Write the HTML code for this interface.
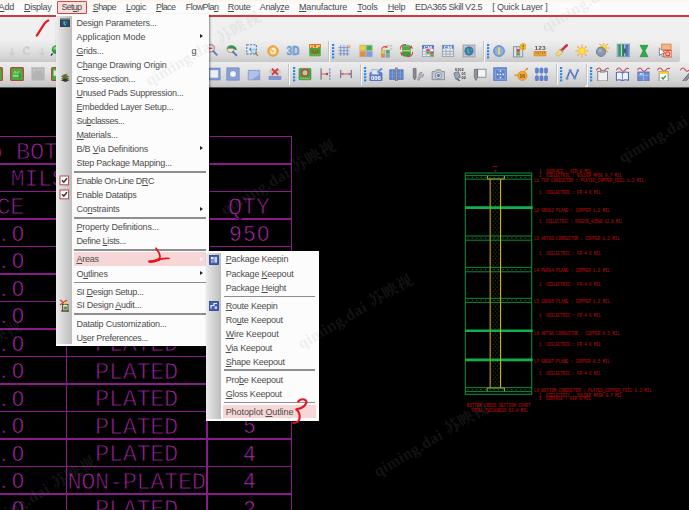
<!DOCTYPE html>
<html><head><meta charset="utf-8"><title>Allegro PCB Designer</title>
<style>
html,body{margin:0;padding:0;background:#000;}
body{width:689px;height:510px;overflow:hidden;position:relative;font-family:"Liberation Sans",sans-serif;}
.abs{position:absolute;}
#canvas{position:absolute;left:0;top:87px;width:689px;height:423px;background:#000;overflow:hidden;}
.hl{position:absolute;height:1.6px;background:#8b1b8b;left:0;width:292px;}
.vl{position:absolute;width:1.6px;background:#8b1b8b;}
.ct{position:absolute;font-family:"Liberation Mono","DejaVu Sans Mono",monospace;font-size:23.6px;line-height:27px;height:27px;color:#ac24ac;white-space:pre;letter-spacing:-0.36px;-webkit-text-stroke:0.9px #000;transform-origin:0 50%;}
.nm{position:absolute;font-family:"Liberation Sans",sans-serif;font-size:21.4px;line-height:27px;height:27px;color:#b82ab8;white-space:pre;-webkit-text-stroke:0.62px #000;}
.menubar{position:absolute;left:0;top:0;width:689px;height:15px;background:linear-gradient(#fdf3e4 0,#fcfaf6 2px,#fcfcfc 4px,#fbfbfb 100%);}
.mb{position:absolute;top:1.1px;font-size:9px;line-height:12px;color:#4a4a4a;letter-spacing:-0.22px;white-space:pre;}
.mb u,.mi u{text-decoration-thickness:0.8px;text-underline-offset:1px;}
.redline{position:absolute;top:15px;height:2px;background:#d23a3a;}
.tbbg{position:absolute;left:0;top:17px;width:689px;height:70px;background:#f0f0f0;}
.menu{position:absolute;background:#fcfcfc;box-shadow:1px 1px 2px rgba(0,0,0,.45);}
.gut{position:absolute;left:0;top:0;bottom:0;width:16px;background:linear-gradient(90deg,#ececec 0,#dcdcdc 30%,#bdbdbd 100%);}
.mi{position:absolute;left:20px;font-size:9px;line-height:14px;height:14px;color:#4d4d4d;letter-spacing:-0.22px;white-space:pre;}
.sep{position:absolute;height:1.7px;background:#8e8e8e;}
.arr{position:absolute;width:0;height:0;border-left:3.5px solid #222;border-top:2.6px solid transparent;border-bottom:2.6px solid transparent;}
.hi{position:absolute;background:#f6d6d6;}
.wm{position:absolute;font-family:"Liberation Serif","Noto Serif CJK SC",serif;font-weight:bold;font-size:16px;line-height:20px;height:20px;white-space:pre;transform:rotate(-30.5deg);transform-origin:0 50%;letter-spacing:0.4px;pointer-events:none;}
</style></head><body>

<div id="canvas">
<div class="hl" style="top:48.9px"></div>
<div class="hl" style="top:76.4px"></div>
<div class="hl" style="top:103.9px"></div>
<div class="hl" style="top:131.4px"></div>
<div class="hl" style="top:158.9px"></div>
<div class="hl" style="top:186.4px"></div>
<div class="hl" style="top:213.9px"></div>
<div class="hl" style="top:241.4px"></div>
<div class="hl" style="top:268.9px"></div>
<div class="hl" style="top:296.4px"></div>
<div class="hl" style="top:323.9px"></div>
<div class="hl" style="top:351.4px"></div>
<div class="hl" style="top:378.9px"></div>
<div class="hl" style="top:406.4px"></div>
<div class="vl" style="left:290.8px;top:49.7px;height:400px"></div>
<div class="vl" style="left:65.5px;top:104.7px;height:400px"></div>
<div class="vl" style="left:206.3px;top:104.7px;height:400px"></div>
<div class="ct" style="left:-259.9px;top:51.6px">DRILL CHART: TOP to BOT</div>
<div class="ct" style="left:57.5px;top:51.6px">TOM</div>
<div class="ct" style="left:-224.2px;top:79.1px">ALL UNITS ARE IN MILS</div>
<div class="ct" style="left:-100.2px;top:106.6px">TOLERANCE</div>
<div class="ct" style="left:95.1px;top:106.6px;width:82.8px">PLATED</div>
<div class="ct" style="left:228.1px;top:106.6px;width:41.4px">QTY</div>
<div class="nm" style="right:665.0px;top:133.5px;letter-spacing:5.4px;margin-right:-5.4px">+0.0/-0.0</div>
<div class="ct" style="left:95.1px;top:134.1px;width:82.8px">PLATED</div>
<div class="nm" style="left:229.6px;top:133.5px;letter-spacing:1.9px">950</div>
<div class="nm" style="right:665.0px;top:161.0px;letter-spacing:5.4px;margin-right:-5.4px">+0.0/-0.0</div>
<div class="ct" style="left:95.1px;top:161.6px;width:82.8px">PLATED</div>
<div class="nm" style="left:229.6px;top:161.0px;letter-spacing:1.9px">120</div>
<div class="nm" style="right:665.0px;top:188.5px;letter-spacing:5.4px;margin-right:-5.4px">+0.0/-0.0</div>
<div class="ct" style="left:95.1px;top:189.1px;width:82.8px">PLATED</div>
<div class="nm" style="left:236.5px;top:188.5px;letter-spacing:1.9px">64</div>
<div class="nm" style="right:665.0px;top:216.0px;letter-spacing:5.4px;margin-right:-5.4px">+0.0/-0.0</div>
<div class="ct" style="left:95.1px;top:216.6px;width:82.8px">PLATED</div>
<div class="nm" style="left:236.5px;top:216.0px;letter-spacing:1.9px">32</div>
<div class="nm" style="right:665.0px;top:243.5px;letter-spacing:5.4px;margin-right:-5.4px">+0.0/-0.0</div>
<div class="ct" style="left:95.1px;top:244.1px;width:82.8px">PLATED</div>
<div class="nm" style="left:236.5px;top:243.5px;letter-spacing:1.9px">18</div>
<div class="nm" style="right:665.0px;top:271.0px;letter-spacing:5.4px;margin-right:-5.4px">+0.0/-0.0</div>
<div class="ct" style="left:95.1px;top:271.6px;width:82.8px">PLATED</div>
<div class="nm" style="left:236.5px;top:271.0px;letter-spacing:1.9px">12</div>
<div class="nm" style="right:665.0px;top:298.5px;letter-spacing:5.4px;margin-right:-5.4px">+0.0/-0.0</div>
<div class="ct" style="left:95.1px;top:299.1px;width:82.8px">PLATED</div>
<div class="nm" style="left:243.4px;top:298.5px;letter-spacing:1.9px">6</div>
<div class="nm" style="right:665.0px;top:326.0px;letter-spacing:5.4px;margin-right:-5.4px">+0.0/-0.0</div>
<div class="ct" style="left:95.1px;top:326.6px;width:82.8px">PLATED</div>
<div class="nm" style="left:243.4px;top:326.0px;letter-spacing:1.9px">5</div>
<div class="nm" style="right:665.0px;top:353.5px;letter-spacing:5.4px;margin-right:-5.4px">+0.0/-0.0</div>
<div class="ct" style="left:95.1px;top:354.1px;width:82.8px">PLATED</div>
<div class="nm" style="left:243.4px;top:353.5px;letter-spacing:1.9px">4</div>
<div class="nm" style="right:665.0px;top:381.0px;letter-spacing:5.4px;margin-right:-5.4px">+0.0/-0.0</div>
<div class="ct" style="left:67.5px;top:381.6px;width:138.0px">NON-PLATED</div>
<div class="nm" style="left:243.4px;top:381.0px;letter-spacing:1.9px">4</div>
<div class="nm" style="right:665.0px;top:408.5px;letter-spacing:5.4px;margin-right:-5.4px">+0.0/-0.0</div>
<div class="ct" style="left:95.1px;top:409.1px;width:82.8px">PLATED</div>
<div class="nm" style="left:243.4px;top:408.5px;letter-spacing:1.9px">2</div>
</div>
<svg class="abs" style="left:0;top:0" width="689" height="510" viewBox="0 0 689 510">
<pattern id="vd" width="4" height="4.4" patternUnits="userSpaceOnUse"><rect x="0.6" y="0.5" width="1.1" height="1.1" fill="#4a4508"/><rect x="2.6" y="2.7" width="1.1" height="1.1" fill="#4a4508"/></pattern>
<rect x="491.2" y="179.6" width="8.8" height="207.8" fill="url(#vd)"/>
<rect x="465.3" y="173" width="66.40000000000003" height="221.3" fill="none" stroke="#0c8a3c" stroke-width="1.1"/>
<line x1="465.3" x2="531.7" y1="175.6" y2="175.6" stroke="#0c8a3c" stroke-width="1"/>
<line x1="465.3" x2="531.7" y1="179.2" y2="179.2" stroke="#0c8a3c" stroke-width="1"/>
<line x1="467.3" x2="529.7" y1="177.39999999999998" y2="177.39999999999998" stroke="#0a6a30" stroke-width="1.4" stroke-dasharray="1.2 3.2"/>
<line x1="465.3" x2="531.7" y1="236" y2="236" stroke="#0c8a3c" stroke-width="1"/>
<line x1="465.3" x2="531.7" y1="240.2" y2="240.2" stroke="#0c8a3c" stroke-width="1"/>
<line x1="467.3" x2="529.7" y1="238.1" y2="238.1" stroke="#0a6a30" stroke-width="1.4" stroke-dasharray="1.2 3.2"/>
<line x1="465.3" x2="531.7" y1="267.4" y2="267.4" stroke="#0c8a3c" stroke-width="1"/>
<line x1="465.3" x2="531.7" y1="271.8" y2="271.8" stroke="#0c8a3c" stroke-width="1"/>
<line x1="467.3" x2="529.7" y1="269.6" y2="269.6" stroke="#0a6a30" stroke-width="1.4" stroke-dasharray="1.2 3.2"/>
<line x1="465.3" x2="531.7" y1="298.3" y2="298.3" stroke="#0c8a3c" stroke-width="1"/>
<line x1="465.3" x2="531.7" y1="302.4" y2="302.4" stroke="#0c8a3c" stroke-width="1"/>
<line x1="467.3" x2="529.7" y1="300.35" y2="300.35" stroke="#0a6a30" stroke-width="1.4" stroke-dasharray="1.2 3.2"/>
<line x1="465.3" x2="531.7" y1="387.6" y2="387.6" stroke="#0c8a3c" stroke-width="1"/>
<line x1="465.3" x2="531.7" y1="391.6" y2="391.6" stroke="#0c8a3c" stroke-width="1"/>
<line x1="467.3" x2="529.7" y1="389.6" y2="389.6" stroke="#0a6a30" stroke-width="1.4" stroke-dasharray="1.2 3.2"/>
<line x1="465.3" x2="532.7" y1="207.6" y2="207.6" stroke="#10b04c" stroke-width="2.6"/>
<line x1="465.3" x2="532.7" y1="330.7" y2="330.7" stroke="#10b04c" stroke-width="2.6"/>
<line x1="465.3" x2="532.7" y1="359.9" y2="359.9" stroke="#10b04c" stroke-width="2.6"/>
<line x1="490.2" x2="490.2" y1="179.2" y2="387.6" stroke="#a08e1a" stroke-width="1.3"/>
<line x1="500.6" x2="500.6" y1="179.2" y2="387.6" stroke="#c9b722" stroke-width="1.1"/>
<path d="M487.4 175.8V179H504.4V175.8" fill="none" stroke="#b9a61c" stroke-width="1"/>
<path d="M487.2 391.4V388H504.6V391.4" fill="none" stroke="#b9a61c" stroke-width="1"/>
<text x="493" y="171.5" font-family="Liberation Mono,monospace" font-size="4" fill="#c01010" textLength="4.5" lengthAdjust="spacingAndGlyphs">T</text>
<line x1="492.8" x2="497.2" y1="166.6" y2="166.6" stroke="#c01010" stroke-width=".8"/>
<text x="539" y="172.7" font-family="Liberation Mono,monospace" font-size="5.4" fill="#a00a0a" stroke="#a00a0a" stroke-width=".15" textLength="52.3" lengthAdjust="spacingAndGlyphs" xml:space="preserve">1  SURFACE : AIR 0 MIL</text>
<text x="539" y="177.0" font-family="Liberation Mono,monospace" font-size="5.4" fill="#a00a0a" stroke="#a00a0a" stroke-width=".15" textLength="82.5" lengthAdjust="spacingAndGlyphs" xml:space="preserve">1  DIELECTRIC : SOLDER MASK 0.7 MIL</text>
<text x="534" y="181.5" font-family="Liberation Mono,monospace" font-size="5.4" fill="#a00a0a" stroke="#a00a0a" stroke-width=".15" textLength="110.0" lengthAdjust="spacingAndGlyphs" xml:space="preserve">L1 TOP CONDUCTOR : PLATED_COPPER_FOIL 1.2 MIL</text>
<text x="539" y="194.0" font-family="Liberation Mono,monospace" font-size="5.4" fill="#a00a0a" stroke="#a00a0a" stroke-width=".15" textLength="61.8" lengthAdjust="spacingAndGlyphs" xml:space="preserve">1  DIELECTRIC : FR-4 8 MIL</text>
<text x="534" y="211.7" font-family="Liberation Mono,monospace" font-size="5.4" fill="#a00a0a" stroke="#a00a0a" stroke-width=".15" textLength="76.0" lengthAdjust="spacingAndGlyphs" xml:space="preserve">L2 GND02 PLANE : COPPER 1.2 MIL</text>
<text x="539" y="223.3" font-family="Liberation Mono,monospace" font-size="5.4" fill="#a00a0a" stroke="#a00a0a" stroke-width=".15" textLength="83.5" lengthAdjust="spacingAndGlyphs" xml:space="preserve">1  DIELECTRIC : ROGERS_4350B 12.0 MIL</text>
<text x="534" y="240.0" font-family="Liberation Mono,monospace" font-size="5.4" fill="#a00a0a" stroke="#a00a0a" stroke-width=".15" textLength="85.6" lengthAdjust="spacingAndGlyphs" xml:space="preserve">L3 ART03 CONDUCTOR : COPPER 1.2 MIL</text>
<text x="539" y="254.6" font-family="Liberation Mono,monospace" font-size="5.4" fill="#a00a0a" stroke="#a00a0a" stroke-width=".15" textLength="61.8" lengthAdjust="spacingAndGlyphs" xml:space="preserve">1  DIELECTRIC : FR-4 8 MIL</text>
<text x="534" y="271.9" font-family="Liberation Mono,monospace" font-size="5.4" fill="#a00a0a" stroke="#a00a0a" stroke-width=".15" textLength="76.0" lengthAdjust="spacingAndGlyphs" xml:space="preserve">L4 PWR04 PLANE : COPPER 1.2 MIL</text>
<text x="539" y="286.1" font-family="Liberation Mono,monospace" font-size="5.4" fill="#a00a0a" stroke="#a00a0a" stroke-width=".15" textLength="61.8" lengthAdjust="spacingAndGlyphs" xml:space="preserve">1  DIELECTRIC : FR-4 8 MIL</text>
<text x="534" y="303.3" font-family="Liberation Mono,monospace" font-size="5.4" fill="#a00a0a" stroke="#a00a0a" stroke-width=".15" textLength="76.0" lengthAdjust="spacingAndGlyphs" xml:space="preserve">L5 GND05 PLANE : COPPER 1.2 MIL</text>
<text x="539" y="317.3" font-family="Liberation Mono,monospace" font-size="5.4" fill="#a00a0a" stroke="#a00a0a" stroke-width=".15" textLength="61.8" lengthAdjust="spacingAndGlyphs" xml:space="preserve">1  DIELECTRIC : FR-4 8 MIL</text>
<text x="534" y="334.6" font-family="Liberation Mono,monospace" font-size="5.4" fill="#a00a0a" stroke="#a00a0a" stroke-width=".15" textLength="85.6" lengthAdjust="spacingAndGlyphs" xml:space="preserve">L6 ART06 CONDUCTOR : COPPER 0.5 MIL</text>
<text x="539" y="345.9" font-family="Liberation Mono,monospace" font-size="5.4" fill="#a00a0a" stroke="#a00a0a" stroke-width=".15" textLength="61.8" lengthAdjust="spacingAndGlyphs" xml:space="preserve">1  DIELECTRIC : FR-4 8 MIL</text>
<text x="534" y="363.3" font-family="Liberation Mono,monospace" font-size="5.4" fill="#a00a0a" stroke="#a00a0a" stroke-width=".15" textLength="76.0" lengthAdjust="spacingAndGlyphs" xml:space="preserve">L7 GND07 PLANE : COPPER 0.5 MIL</text>
<text x="539" y="374.8" font-family="Liberation Mono,monospace" font-size="5.4" fill="#a00a0a" stroke="#a00a0a" stroke-width=".15" textLength="61.8" lengthAdjust="spacingAndGlyphs" xml:space="preserve">1  DIELECTRIC : FR-4 8 MIL</text>
<text x="534" y="392.1" font-family="Liberation Mono,monospace" font-size="5.4" fill="#a00a0a" stroke="#a00a0a" stroke-width=".15" textLength="117.7" lengthAdjust="spacingAndGlyphs" xml:space="preserve">L8 BOTTOM CONDUCTOR : PLATED_COPPER_FOIL 1.2 MIL</text>
<text x="539" y="396.5" font-family="Liberation Mono,monospace" font-size="5.4" fill="#a00a0a" stroke="#a00a0a" stroke-width=".15" textLength="83.0" lengthAdjust="spacingAndGlyphs" xml:space="preserve">1  DIELECTRIC : SOLDER MASK 0.7 MIL</text>
<text x="539" y="399.9" font-family="Liberation Mono,monospace" font-size="5.4" fill="#a00a0a" stroke="#a00a0a" stroke-width=".15" textLength="52.0" lengthAdjust="spacingAndGlyphs" xml:space="preserve">1  SURFACE : AIR 0 MIL</text>
<text x="466.8" y="407.0" font-family="Liberation Mono,monospace" font-size="5.4" fill="#a00a0a" stroke="#a00a0a" stroke-width=".15" textLength="63.7" lengthAdjust="spacingAndGlyphs" xml:space="preserve">BOTTOM CROSS SECTION CHART</text>
<text x="470.7" y="412.1" font-family="Liberation Mono,monospace" font-size="5.4" fill="#a00a0a" stroke="#a00a0a" stroke-width=".15" textLength="56.8" lengthAdjust="spacingAndGlyphs" xml:space="preserve">TOTAL THICKNESS 62.0 MIL</text>
</svg>
<div class="tbbg"></div>
<div class="abs" style="left:0;top:39.5px;width:680px;height:22.5px;background:linear-gradient(#efefef 0,#e9e9e9 25%,#d6d6d6 75%,#c9c9c9 100%);border-radius:0 2px 2px 0"></div>
<div class="abs" style="left:0;top:62px;width:585.5px;height:25px;background:linear-gradient(#ececec 0,#e4e4e4 30%,#d0d0d0 80%,#c2c2c2 100%);border-radius:0 2px 2px 0"></div>
<div class="abs" style="left:587.5px;top:62px;width:102px;height:25px;background:linear-gradient(#ececec 0,#e4e4e4 30%,#d0d0d0 80%,#c2c2c2 100%);"></div>
<div class="abs" style="left:0;top:86.6px;width:689px;height:1px;background:#555"></div>
<div class="menubar"></div>
<div class="redline" style="left:0;width:689px"></div>
<div class="abs" style="left:56.8px;top:1.2px;width:28.4px;height:10.4px;border:1px solid #cf4848;background:#f9dede;box-sizing:content-box;border-radius:1px"></div>
<span class="mb" style="left:-1.4px;letter-spacing:-0.212px"><u>A</u>dd</span>
<span class="mb" style="left:24px;letter-spacing:-0.303px"><u>D</u>isplay</span>
<span class="mb" style="left:61.6px;letter-spacing:-0.771px">Set<u>u</u>p</span>
<span class="mb" style="left:92.7px;letter-spacing:-0.571px"><u>S</u>hape</span>
<span class="mb" style="left:126px;letter-spacing:-0.347px"><u>L</u>ogic</span>
<span class="mb" style="left:156px;letter-spacing:-0.628px"><u>P</u>lace</span>
<span class="mb" style="left:185.8px;letter-spacing:-0.555px">FlowPla<u>n</u></span>
<span class="mb" style="left:227.8px;letter-spacing:-0.264px"><u>R</u>oute</span>
<span class="mb" style="left:259.8px;letter-spacing:-0.406px">Analy<u>z</u>e</span>
<span class="mb" style="left:299px;letter-spacing:-0.177px"><u>M</u>anufacture</span>
<span class="mb" style="left:357.3px;letter-spacing:-0.144px"><u>T</u>ools</span>
<span class="mb" style="left:387.8px;letter-spacing:-0.28px"><u>H</u>elp</span>
<span class="mb" style="left:415.1px;letter-spacing:-0.385px">EDA365 Skill V2.5</span>
<span class="mb" style="left:492.3px;letter-spacing:-0.189px">[ Quick Layer ]</span>
<svg class="abs" style="left:4.6px;top:45.0px;filter:blur(0.5px)" width="14.0" height="14.0" viewBox="0 0 16 16"><path d="M8 3V11M5 8.5L8 11.5L11 8.5" fill="none" stroke="#cbcbcb" stroke-width="1.5"/><path d="M4.5 13.6H11.5" stroke="#cfcfcf" stroke-width="1.2"/></svg>
<svg class="abs" style="left:34.8px;top:45.0px;filter:blur(0.5px)" width="14.0" height="14.0" viewBox="0 0 16 16"><path d="M8 3V11M5 8.5L8 11.5L11 8.5" fill="none" stroke="#cbcbcb" stroke-width="1.5"/><path d="M4.5 13.6H11.5" stroke="#cfcfcf" stroke-width="1.2"/></svg>
<svg class="abs" style="left:20.0px;top:44.0px;filter:blur(0.5px)" width="14.0" height="14.0" viewBox="0 0 16 16"><path d="M10.5 4.2A4 4 0 1 0 11 10.5" fill="none" stroke="#cbcbcb" stroke-width="1.8"/><path d="M8 2.5L11.5 4.5L8.5 7Z" fill="#cbcbcb"/></svg>
<svg class="abs" style="left:-10.0px;top:45.0px;filter:blur(0.5px)" width="14.0" height="14.0" viewBox="0 0 16 16"><path d="M8 3V12" stroke="#c6c6c6" stroke-width="2"/></svg>
<svg class="abs" style="left:50.0px;top:43.0px;filter:blur(0.5px)" width="14.0" height="14.0" viewBox="0 0 16 16"><circle cx="7" cy="7.5" r="5" fill="#2ea043"/><circle cx="6" cy="6" r="2" fill="#7fd88a"/><path d="M3 12L1 14.5" stroke="#334" stroke-width="1.5"/></svg>
<svg class="abs" style="left:204.5px;top:43.0px;filter:blur(0.5px)" width="14.0" height="14.0" viewBox="0 0 16 16"><circle cx="6.5" cy="6" r="4.2" fill="#f6e4e4" stroke="#b9848a" stroke-width="1.3"/><path d="M4.5 6H8.5" stroke="#d02020" stroke-width="1.3"/><path d="M9.5 9.2L13.5 13.5" stroke="#6c78b8" stroke-width="2.2" stroke-linecap="round"/></svg>
<svg class="abs" style="left:225.0px;top:43.0px;filter:blur(0.5px)" width="14.0" height="14.0" viewBox="0 0 16 16"><circle cx="6.2" cy="7" r="3.8" fill="#f3e3d8" stroke="#c9a58e" stroke-width="1.3"/><path d="M2.5 6.5C4 2.5 10 2 12.5 5.5L13 8L9.5 6.2" fill="#2c9a4e" stroke="#1f7c3c" stroke-width=".6"/><path d="M9 10L13 14" stroke="#6c78b8" stroke-width="2.2" stroke-linecap="round"/></svg>
<svg class="abs" style="left:245.0px;top:43.0px;filter:blur(0.5px)" width="14.0" height="14.0" viewBox="0 0 16 16"><rect x="2" y="2" width="11" height="10.5" fill="#dfe8f1" stroke="#5d7e9e" stroke-width="1.3" stroke-dasharray="2.4 1.4"/><path d="M4.5 7.2L7 4.8V9.6Z" fill="#5d7e9e"/><circle cx="10" cy="9.5" r="2.6" fill="#bfe0f7" stroke="#7aa6c8" stroke-width=".8"/><path d="M12 11.6L14.5 14.3" stroke="#b9822c" stroke-width="1.6" stroke-linecap="round"/></svg>
<svg class="abs" style="left:266.0px;top:43.5px;filter:blur(0.5px)" width="14.0" height="14.0" viewBox="0 0 16 16"><circle cx="8" cy="8" r="6" fill="#f3a83a" stroke="#e08c1e" stroke-width=".8"/><circle cx="8" cy="8" r="4.4" fill="#f9c468"/><path d="M5.6 8.4A2.5 2.5 0 1 0 8 5.6" fill="none" stroke="#fff" stroke-width="1.3"/><path d="M8.4 3.9L6 5.7L8.6 7.2Z" fill="#fff"/></svg>
<svg class="abs" style="left:286.1px;top:43.1px;filter:blur(0.5px)" width="14.875" height="14.875" viewBox="0 0 16 16"><path d="M4 4L14 4L15 13L5 13Z" fill="#9fbfdf" opacity=".55"/><text x="0.6" y="13" font-family="Liberation Sans,sans-serif" font-weight="bold" font-size="13.5" fill="#7aa6d6" stroke="#5b8cc4" stroke-width=".3" textLength="14" lengthAdjust="spacingAndGlyphs">3D</text></svg>
<svg class="abs" style="left:307.5px;top:43.0px;filter:blur(0.5px)" width="14.0" height="14.0" viewBox="0 0 16 16"><rect x="1.5" y="1" width="13" height="14" rx="1" fill="#3fa33a"/><rect x="1.5" y="1" width="13" height="5" rx="1" fill="#d9731c"/><text x="2.2" y="5.3" font-family="Liberation Sans,sans-serif" font-weight="bold" font-size="4.6" fill="#ffe9a8" textLength="11.6" lengthAdjust="spacingAndGlyphs">FLIP</text><path d="M4.5 8.5C5 12 11 12 11.5 8.5" fill="none" stroke="#c8451e" stroke-width="1.5"/><path d="M2.5 13.6H13.5" stroke="#c9d84a" stroke-width="1" stroke-dasharray="1.5 1"/></svg>
<div class="abs" style="left:329.0px;top:40.7px;width:1px;height:21px;background:#f8f8f8;box-shadow:-1px 0 0 #c4c4c4"></div>
<svg class="abs" style="left:332.4px;top:43.5px;filter:blur(.3px)" width="3" height="15" viewBox="0 0 3 15"><rect x="0" y="0.0" width="2.2" height="2" fill="#2b86e6"/><rect x="0" y="3.1" width="2.2" height="2" fill="#2b86e6"/><rect x="0" y="6.2" width="2.2" height="2" fill="#2b86e6"/><rect x="0" y="9.3" width="2.2" height="2" fill="#2b86e6"/><rect x="0" y="12.4" width="2.2" height="2" fill="#2b86e6"/></svg>
<svg class="abs" style="left:337.1px;top:43.1px;filter:blur(0.5px)" width="14.875" height="14.875" viewBox="0 0 16 16"><path d="M4 2V14M7.5 2V14M11 2V14M1.5 5H13.5M1.5 8.3H13.5M1.5 11.6H13.5" stroke="#6a8ccc" stroke-width=".9"/><path d="M12.5 0.8L13.4 3L15.6 3.2L13.8 4.4L14.4 6.4L12.5 5.2" fill="#f4a63a"/></svg>
<svg class="abs" style="left:358.5px;top:43.5px;filter:blur(0.5px)" width="14.0" height="14.0" viewBox="0 0 16 16"><rect x="1" y="1.4" width="6.4" height="6" fill="#f2cf2a" stroke="#b9b08a" stroke-width=".9"/><rect x="8.6" y="1.4" width="6.4" height="6" fill="#3fae4a" stroke="#9ab79a" stroke-width=".9"/><rect x="1" y="8.6" width="6.4" height="6" fill="#ec8a3c" stroke="#c4a78f" stroke-width=".9"/><rect x="8.6" y="8.6" width="6.4" height="6" fill="#7d9fdf" stroke="#96a4c4" stroke-width=".9"/></svg>
<svg class="abs" style="left:379.0px;top:43.5px;filter:blur(0.5px)" width="14.0" height="14.0" viewBox="0 0 16 16"><rect x="9" y="1" width="2.6" height="2.6" fill="#c9c9c9"/><rect x="12.5" y="1" width="2.6" height="2.6" fill="#c9c9c9"/><rect x="12.5" y="4.6" width="2.6" height="2.6" fill="#c9c9c9"/><rect x="2.5" y="7" width="4.2" height="4" fill="#f2cf2a" stroke="#a99" stroke-width=".6"/><rect x="8" y="7" width="4.2" height="4" fill="#3fae4a" stroke="#8a9" stroke-width=".6"/><rect x="2.5" y="11.6" width="4.2" height="3.6" fill="#ec8a3c" stroke="#a98" stroke-width=".6"/><rect x="8" y="11.6" width="4.2" height="3.6" fill="#7d9fdf" stroke="#89a" stroke-width=".6"/><path d="M3 6.4C3.5 3 6.5 2.2 8.6 3.6" fill="none" stroke="#d9483c" stroke-width="1.3"/><path d="M7.6 1.6L10 4L6.8 4.8Z" fill="#d9483c"/></svg>
<svg class="abs" style="left:399.3px;top:43.1px;filter:blur(0.5px)" width="14.875" height="14.875" viewBox="0 0 16 16"><ellipse cx="8" cy="4.3" rx="4.6" ry="2" fill="#5bb85a" stroke="#2f8a3a" stroke-width=".7"/><rect x="3.4" y="4.3" width="9.2" height="8" fill="#4aa94d"/><ellipse cx="8" cy="12.3" rx="4.6" ry="2" fill="#3f9a45" stroke="#2f8a3a" stroke-width=".7"/><path d="M4 8.3H12" stroke="#e6d94a" stroke-width="1.2"/><path d="M1.5 7C0.5 3.5 4 1.5 7.5 1.6M14.5 9.5C15.5 13 12 15 8.5 14.6" fill="none" stroke="#d8454a" stroke-width="1.1"/><path d="M13.2 2.2L15 6.2L11.4 5.6ZM2.8 14L1 10L4.6 10.6Z" fill="#d8454a"/></svg>
<svg class="abs" style="left:420.5px;top:43.5px;filter:blur(0.5px)" width="14.0" height="14.0" viewBox="0 0 16 16"><rect x="1.5" y="1.5" width="13" height="13" fill="#e9edf3" stroke="#8d9bb5" stroke-width=".9"/><rect x="1.5" y="1.5" width="13" height="4" fill="#4d76c2"/><text x="3" y="5.2" font-family="Liberation Sans,sans-serif" font-weight="bold" font-size="4.4" fill="#fff" textLength="9.5" lengthAdjust="spacingAndGlyphs">CM</text><path d="M5.8 5.5V14.5M10.2 5.5V14.5M1.5 8.5H14.5M1.5 11.5H14.5" stroke="#8d9bb5" stroke-width=".7"/><rect x="6.2" y="6" width="3.6" height="2.3" fill="#e23a3a"/><rect x="10.6" y="8.9" width="3.6" height="2.3" fill="#e23a3a"/><rect x="6.2" y="8.9" width="3.6" height="2.3" fill="#3fae4a"/><rect x="10.6" y="11.8" width="3.6" height="2.3" fill="#3fae4a"/></svg>
<svg class="abs" style="left:440.6px;top:43.5px;filter:blur(0.5px)" width="14.0" height="14.0" viewBox="0 0 16 16"><rect x="1.5" y="1.5" width="13" height="13" fill="#e4e7ec" stroke="#8f98a8" stroke-width=".9"/><rect x="1.5" y="1.5" width="13" height="4" fill="#5f85c8"/><text x="3" y="5.2" font-family="Liberation Sans,sans-serif" font-weight="bold" font-size="4.4" fill="#fff" textLength="9.5" lengthAdjust="spacingAndGlyphs">CM</text><path d="M5.8 5.5V14.5M10.2 5.5V14.5M1.5 8.5H14.5M1.5 11.5H14.5" stroke="#8f98a8" stroke-width=".8"/></svg>
<svg class="abs" style="left:461.6px;top:43.5px;filter:blur(0.5px)" width="14.0" height="14.0" viewBox="0 0 16 16"><rect x="1.2" y="1.2" width="13.6" height="13.6" fill="#c9ccd2" stroke="#8f949c" stroke-width=".9"/><path d="M4.6 1.2V14.8M8 1.2V14.8M11.4 1.2V14.8M1.2 4.6H14.8M1.2 8H14.8M1.2 11.4H14.8" stroke="#9aa0a8" stroke-width=".6"/><circle cx="8" cy="8" r="4.8" fill="#3c78c8" stroke="#2a5a9a" stroke-width=".6"/><path d="M5.5 5.5C7 4.5 8.5 5.5 8 7C7.5 8.5 9.5 9 9 10.5C8.5 12 6.5 11 6 9.5Z" fill="#4fb85a"/><path d="M10 5L11.6 6.5L10.6 8Z" fill="#4fb85a"/></svg>
<div class="abs" style="left:483.5px;top:40.7px;width:1px;height:21px;background:#f8f8f8;box-shadow:-1px 0 0 #c4c4c4"></div>
<svg class="abs" style="left:486.9px;top:43.5px;filter:blur(.3px)" width="3" height="15" viewBox="0 0 3 15"><rect x="0" y="0.0" width="2.2" height="2" fill="#2b86e6"/><rect x="0" y="3.1" width="2.2" height="2" fill="#2b86e6"/><rect x="0" y="6.2" width="2.2" height="2" fill="#2b86e6"/><rect x="0" y="9.3" width="2.2" height="2" fill="#2b86e6"/><rect x="0" y="12.4" width="2.2" height="2" fill="#2b86e6"/></svg>
<svg class="abs" style="left:492.0px;top:43.5px;filter:blur(0.5px)" width="14.0" height="14.0" viewBox="0 0 16 16"><circle cx="8" cy="8" r="6.2" fill="#7b9fdc" stroke="#5a7fc0" stroke-width=".9"/><circle cx="8" cy="8" r="4.8" fill="#8fb0e6"/><rect x="7.1" y="4" width="1.8" height="8" fill="#f6e23a"/></svg>
<svg class="abs" style="left:511.6px;top:43.1px;filter:blur(0.5px)" width="14.875" height="14.875" viewBox="0 0 16 16"><rect x="1.5" y="4" width="10" height="11" fill="#dfe2e6" stroke="#7f858f" stroke-width=".9"/><path d="M5 4V15M8.3 4V15" stroke="#7f858f" stroke-width=".7"/><rect x="5.3" y="6.5" width="2.8" height="3" fill="#e23a3a"/><rect x="5.3" y="10" width="2.8" height="3.4" fill="#3fae4a"/><circle cx="12" cy="4" r="3.4" fill="#f6c12a" stroke="#d99a1a" stroke-width=".7"/><rect x="11.5" y="2" width="1.1" height="2.6" fill="#7a4a10"/><rect x="11.5" y="5.2" width="1.1" height="1" fill="#7a4a10"/></svg>
<svg class="abs" style="left:533.0px;top:43.5px;filter:blur(0.5px)" width="14.0" height="14.0" viewBox="0 0 16 16"><text x="1.8" y="7" font-family="Liberation Sans,sans-serif" font-weight="bold" font-size="6.6" fill="#5a5a5a" textLength="12.6" lengthAdjust="spacingAndGlyphs">123</text><rect x="1.2" y="8.6" width="13.6" height="5" fill="#f0a43a" stroke="#d48a1e" stroke-width=".8"/><path d="M3.5 8.6V11M6 8.6V12M8.5 8.6V11M11 8.6V12M13 8.6V11" stroke="#9a5a10" stroke-width=".7"/></svg>
<svg class="abs" style="left:554.0px;top:43.5px;filter:blur(0.5px)" width="14.0" height="14.0" viewBox="0 0 16 16"><path d="M9.5 6.5L14.5 1.5" stroke="#c9304a" stroke-width="3" stroke-linecap="round"/><path d="M7 5.5L10.5 9L6 13.5C4 14.5 2 13 2.5 11Z" fill="#f0d88a" stroke="#c9a94a" stroke-width=".8"/><path d="M7.2 6L10 8.8" stroke="#8a8a8a" stroke-width="1.4"/></svg>
<svg class="abs" style="left:574.6px;top:43.5px;filter:blur(0.5px)" width="14.0" height="14.0" viewBox="0 0 16 16"><g stroke="#f0a030" stroke-width="1.3"><path d="M8 0.5V3M8 13V15.5M0.5 8H3M13 8H15.5M2.7 2.7L4.5 4.5M11.5 11.5L13.3 13.3M2.7 13.3L4.5 11.5M11.5 4.5L13.3 2.7"/></g><circle cx="8" cy="8" r="4" fill="#fbe23a" stroke="#f0b030" stroke-width=".8"/></svg>
<svg class="abs" style="left:595.0px;top:43.1px;filter:blur(0.5px)" width="14.875" height="14.875" viewBox="0 0 16 16"><g transform="translate(2.5,-1.5) scale(.85)"><g stroke="#f0a030" stroke-width="1.3"><path d="M8 0.5V3M8 13V15.5M0.5 8H3M13 8H15.5M2.7 2.7L4.5 4.5M11.5 11.5L13.3 13.3M2.7 13.3L4.5 11.5M11.5 4.5L13.3 2.7"/></g><circle cx="8" cy="8" r="4" fill="#fbe23a" stroke="#f0b030" stroke-width=".8"/></g><circle cx="6.5" cy="9.5" r="5" fill="#8a98b4" stroke="#5f6c88" stroke-width=".8"/><circle cx="5.3" cy="8.2" r="2" fill="#a6b2ca"/></svg>
<svg class="abs" style="left:615.6px;top:43.1px;filter:blur(0.5px)" width="14.875" height="14.875" viewBox="0 0 16 16"><rect x="1.2" y="1.2" width="13.6" height="13.6" fill="#b9d0e8" stroke="#6f8fb8" stroke-width=".8"/><rect x="2.4" y="1.6" width="2.8" height="12.8" fill="#2f9a4a"/><rect x="6.6" y="1.6" width="2.2" height="12.8" fill="#2f7a5a"/><rect x="10" y="1.6" width="3.6" height="12.8" fill="#4f78b8"/><rect x="9" y="6" width="1.2" height="5" fill="#223"/></svg>
<svg class="abs" style="left:637.0px;top:43.5px;filter:blur(0.5px)" width="14.0" height="14.0" viewBox="0 0 16 16"><path d="M3.5 1.5H12.5L9 8L12.5 14.5H3.5L7 8Z" fill="#2faa4a" stroke="#1f8a3a" stroke-width=".8"/></svg>
<svg class="abs" style="left:657.6px;top:43.1px;filter:blur(0.5px)" width="14.875" height="14.875" viewBox="0 0 16 16"><rect x="4" y="1.2" width="10" height="6" fill="#f0b88a" stroke="#d9854a" stroke-width="1"/><rect x="6" y="8" width="9" height="7" rx="1" fill="#f6cfc0" stroke="#e2573a" stroke-width="1.1"/><circle cx="10.5" cy="11.5" r="2.2" fill="none" stroke="#e2402a" stroke-width="1.1"/><path d="M1.5 5.5V13.5L3.6 11.6L5.2 15L6.6 14.3L5 11L7.6 10.8Z" fill="#fff" stroke="#667" stroke-width=".8"/></svg>
<svg class="abs" style="left:-11.2px;top:67.0px;filter:blur(0.5px)" width="14.0" height="14.0" viewBox="0 0 16 16"><rect x="0.8" y="0.8" width="14.4" height="14.4" rx="1" fill="#3fb23f" stroke="#b8453a" stroke-width="1.5"/></svg>
<svg class="abs" style="left:9.5px;top:67.0px;filter:blur(0.5px)" width="14.0" height="14.0" viewBox="0 0 16 16"><rect x="0.8" y="0.8" width="14.4" height="14.4" rx="1" fill="#3fb23f" stroke="#b8453a" stroke-width="1.5"/><path d="M3 7.5L5.5 3L8 6L10.5 3L13 7.5" fill="#6fd46a" stroke="#c86a4a" stroke-width=".7"/><rect x="3.5" y="9" width="6" height="2.2" fill="#8fe08a"/><path d="M11.3 5V13" stroke="#2a8a2a" stroke-width="1"/></svg>
<svg class="abs" style="left:31.2px;top:67.0px;filter:blur(0.5px)" width="14.0" height="14.0" viewBox="0 0 16 16"><rect x="0.6" y="0.6" width="14.8" height="14.8" fill="#b4b4b4" stroke="#c2c2c2" stroke-width=".8"/><path d="M3 7V3.2H13V7" fill="none" stroke="#c9c9c9" stroke-width="1.2"/></svg>
<svg class="abs" style="left:51.0px;top:67.0px;filter:blur(0.5px)" width="14.0" height="14.0" viewBox="0 0 16 16"><rect x="0.8" y="0.8" width="14.4" height="14.4" rx="1" fill="#3fb23f" stroke="#b8453a" stroke-width="1.5"/><rect x="3" y="4" width="5" height="6" fill="#d8f0d8"/></svg>
<svg class="abs" style="left:207.0px;top:67.0px;filter:blur(0.5px)" width="14.0" height="14.0" viewBox="0 0 16 16"><rect x="1" y="1.2" width="14" height="13.6" fill="#7f98d4" stroke="#6f86c4" stroke-width=".8"/><rect x="3.2" y="3.6" width="9.6" height="8.6" fill="#e9eef8"/></svg>
<svg class="abs" style="left:226.0px;top:67.0px;filter:blur(0.5px)" width="14.0" height="14.0" viewBox="0 0 16 16"><rect x="1" y="1" width="14" height="14" fill="#8aa2d8" stroke="#6f86c4" stroke-width=".9"/><circle cx="8" cy="8" r="4" fill="#f2f5fb" stroke="#5f76b4" stroke-width=".8"/></svg>
<svg class="abs" style="left:247.0px;top:67.5px;filter:blur(0.5px)" width="14.0" height="14.0" viewBox="0 0 16 16"><rect x="1.2" y="2.6" width="13.6" height="11" rx="1" fill="#8aa2d8" stroke="#7f90c0" stroke-width=".8" stroke-dasharray="2 1"/><path d="M2 3.4H14V7L6 13H2Z" fill="#b9c8ea" opacity=".8"/></svg>
<svg class="abs" style="left:267.5px;top:67.0px;filter:blur(0.5px)" width="14.0" height="14.0" viewBox="0 0 16 16"><rect x="1.5" y="3" width="13" height="4.5" fill="#c9c9c9"/><rect x="1.2" y="10.5" width="13.6" height="3.8" fill="#7f98d4" stroke="#6f86c4" stroke-width=".7"/><path d="M4.5 2L11.5 9M11.5 2L4.5 9" stroke="#d83a3a" stroke-width="2.2"/></svg>
<div class="abs" style="left:289.2px;top:64.0px;width:1px;height:21px;background:#f8f8f8;box-shadow:-1px 0 0 #c4c4c4"></div>
<svg class="abs" style="left:292.6px;top:66.8px;filter:blur(.3px)" width="3" height="15" viewBox="0 0 3 15"><rect x="0" y="0.0" width="2.2" height="2" fill="#2b86e6"/><rect x="0" y="3.1" width="2.2" height="2" fill="#2b86e6"/><rect x="0" y="6.2" width="2.2" height="2" fill="#2b86e6"/><rect x="0" y="9.3" width="2.2" height="2" fill="#2b86e6"/><rect x="0" y="12.4" width="2.2" height="2" fill="#2b86e6"/></svg>
<svg class="abs" style="left:297.6px;top:67.0px;filter:blur(0.5px)" width="14.0" height="14.0" viewBox="0 0 16 16"><rect x="1.2" y="1.6" width="13.6" height="13" rx="1" fill="#3fa94a" stroke="#2f8a3a" stroke-width=".7"/><circle cx="8" cy="6.6" r="3.8" fill="#9fd8a0" stroke="#d83a3a" stroke-width="1.8"/><path d="M2.5 13H13.5" stroke="#d8d84a" stroke-width="1" stroke-dasharray="1.5 1"/></svg>
<svg class="abs" style="left:318.0px;top:67.0px;filter:blur(0.5px)" width="14.0" height="14.0" viewBox="0 0 16 16"><path d="M3.5 1.5V14.5" stroke="#5a5a6a" stroke-width="1.1"/><path d="M13.5 1.5V14.5" stroke="#4a6ab8" stroke-width="1.1" stroke-dasharray="2.5 1.2"/><path d="M3.5 8H11" stroke="#d85a5a" stroke-width="1.1"/><circle cx="10.2" cy="8" r="1.5" fill="#d83a3a"/></svg>
<svg class="abs" style="left:339.0px;top:67.0px;filter:blur(0.5px)" width="14.0" height="14.0" viewBox="0 0 16 16"><path d="M2 3.5V12.5M14 3.5V12.5" stroke="#4a6ab8" stroke-width="1.2"/><path d="M2 8H14" stroke="#d85a5a" stroke-width="1.1"/><path d="M2.3 8L5 6.4V9.6ZM13.7 8L11 6.4V9.6Z" fill="#d85a5a"/></svg>
<div class="abs" style="left:360.5px;top:64.0px;width:1px;height:21px;background:#f8f8f8;box-shadow:-1px 0 0 #c4c4c4"></div>
<svg class="abs" style="left:363.9px;top:66.8px;filter:blur(.3px)" width="3" height="15" viewBox="0 0 3 15"><rect x="0" y="0.0" width="2.2" height="2" fill="#2b86e6"/><rect x="0" y="3.1" width="2.2" height="2" fill="#2b86e6"/><rect x="0" y="6.2" width="2.2" height="2" fill="#2b86e6"/><rect x="0" y="9.3" width="2.2" height="2" fill="#2b86e6"/><rect x="0" y="12.4" width="2.2" height="2" fill="#2b86e6"/></svg>
<svg class="abs" style="left:368.6px;top:66.6px;filter:blur(0.5px)" width="14.875" height="14.875" viewBox="0 0 16 16"><rect x="1" y="6" width="13" height="9" rx="1" fill="#5f82cc" stroke="#4a6ab4" stroke-width=".8"/><rect x="3" y="3" width="7" height="5" fill="#dfe6f4" stroke="#8a9cc8" stroke-width=".7"/><path d="M9 6L14 1.5" stroke="#6f90d8" stroke-width="2.2"/><text x="2.2" y="13.6" font-family="Liberation Sans,sans-serif" font-weight="bold" font-size="5.6" fill="#fff" textLength="10.6" lengthAdjust="spacingAndGlyphs">006</text></svg>
<svg class="abs" style="left:389.3px;top:66.6px;filter:blur(0.5px)" width="14.875" height="14.875" viewBox="0 0 16 16"><rect x="0.8" y="3" width="6" height="10.6" fill="#5f82cc" stroke="#4a6ab4" stroke-width=".7"/><rect x="9.2" y="3" width="6" height="10.6" fill="#5f82cc" stroke="#4a6ab4" stroke-width=".7"/><path d="M0.8 6.5H15.2M0.8 10H15.2M3.8 3V13.6M12.2 3V13.6" stroke="#8aa8e0" stroke-width=".6"/><rect x="6.8" y="1" width="2.4" height="14" fill="#9a9fa8" stroke="#6a6f78" stroke-width=".6"/></svg>
<svg class="abs" style="left:409.6px;top:66.6px;filter:blur(0.5px)" width="14.875" height="14.875" viewBox="0 0 16 16"><path d="M3.5 1.5V11L5 14L6.5 11V1.5Z" fill="#8a8f98" stroke="#5a5f68" stroke-width=".7"/><path d="M8 13.5L10 9.5C9 7.5 10.5 5.5 13 5.8L11.6 7.6L12.8 9L14.8 7.8C15 10 13 11.5 11.4 10.8L9.6 14.5Z" fill="#b9bec8" stroke="#7a7f88" stroke-width=".7"/></svg>
<svg class="abs" style="left:430.6px;top:66.6px;filter:blur(0.5px)" width="14.875" height="14.875" viewBox="0 0 16 16"><path d="M1.2 5H4.5L5.8 3H10.2L11.5 5H14.8V13.6H1.2Z" fill="#c4c7cc" stroke="#7f848c" stroke-width=".9"/><circle cx="8" cy="9.2" r="3.3" fill="#e9ecf2" stroke="#6f747c" stroke-width=".8"/><circle cx="8" cy="9.2" r="1.9" fill="#5f86cc"/></svg>
<svg class="abs" style="left:451.6px;top:66.6px;filter:blur(0.5px)" width="14.875" height="14.875" viewBox="0 0 16 16"><path d="M2 6.5L7 5L9 11L4 13Z" fill="#9aa6b8" stroke="#5f6a7c" stroke-width=".8"/><path d="M5 12.5L8.5 15.2" stroke="#5f6a7c" stroke-width="1.6"/><text x="3" y="4.2" font-family="Liberation Sans,sans-serif" font-weight="bold" font-size="4.4" fill="#333" textLength="9.5" lengthAdjust="spacingAndGlyphs">0102</text><text x="10.2" y="8.8" font-family="Liberation Sans,sans-serif" font-weight="bold" font-size="4.2" fill="#333">01</text><text x="10.2" y="13.4" font-family="Liberation Sans,sans-serif" font-weight="bold" font-size="4.2" fill="#333">02</text></svg>
<svg class="abs" style="left:472.1px;top:66.6px;filter:blur(0.5px)" width="14.875" height="14.875" viewBox="0 0 16 16"><rect x="6" y="2.4" width="9" height="8.6" fill="#f4f4f4" stroke="#7f848c" stroke-width=".9"/><path d="M2.5 2.5H6V11L4.2 14.5L2.5 11Z" fill="#8f949c" stroke="#5a5f68" stroke-width=".7"/></svg>
<svg class="abs" style="left:492.6px;top:66.6px;filter:blur(0.5px)" width="14.875" height="14.875" viewBox="0 0 16 16"><rect x="0.8" y="0.8" width="14.4" height="14.4" fill="#6f8fd4" stroke="#5a78c0" stroke-width=".9"/><rect x="3" y="3" width="10" height="10" fill="#5f82cc" stroke="#9fb6e8" stroke-width=".6"/><g fill="#f2f5fb"><rect x="7.2" y="3.6" width="1.6" height="1.6"/><rect x="4.2" y="7.2" width="1.6" height="1.6"/><rect x="10.2" y="7.2" width="1.6" height="1.6"/><rect x="7.2" y="10.6" width="1.6" height="1.6"/><rect x="7.2" y="7.2" width="1.6" height="1.6"/></g></svg>
<svg class="abs" style="left:513.6px;top:67.1px;filter:blur(0.5px)" width="14.875" height="14.875" viewBox="0 0 16 16"><path d="M1 9H6M10 6L14 1.8" stroke="#e89a2a" stroke-width="1.2"/><circle cx="1.6" cy="9" r="1.2" fill="#e89a2a"/><circle cx="14" cy="2" r="1.3" fill="#e89a2a"/><circle cx="9" cy="9.5" r="5" fill="#f2a83a" stroke="#d98a1e" stroke-width=".8"/><text x="6" y="11.6" font-family="Liberation Sans,sans-serif" font-weight="bold" font-size="5.6" fill="#7a4a10" textLength="6" lengthAdjust="spacingAndGlyphs">16</text></svg>
<svg class="abs" style="left:533.6px;top:66.6px;filter:blur(0.5px)" width="14.875" height="14.875" viewBox="0 0 16 16"><g fill="#5f86d0" stroke="#4a6ab4" stroke-width=".5"><rect x="1.4" y="1" width="3.4" height="5.6" rx="1.2"/><rect x="6.3" y="1" width="3.4" height="5.6" rx="1.2"/><rect x="11.2" y="1" width="3.4" height="5.6" rx="1.2"/><rect x="1.4" y="9.4" width="3.4" height="5.6" rx="1.2"/><rect x="6.3" y="9.4" width="3.4" height="5.6" rx="1.2"/><rect x="11.2" y="9.4" width="3.4" height="5.6" rx="1.2"/></g><path d="M3.1 6.6V9.4M8 6.6V9.4M12.9 6.6V9.4" stroke="#8aa8e0" stroke-width="1"/></svg>
<div class="abs" style="left:556.5px;top:64.0px;width:1px;height:21px;background:#f8f8f8;box-shadow:-1px 0 0 #c4c4c4"></div>
<svg class="abs" style="left:559.9px;top:66.8px;filter:blur(.3px)" width="3" height="15" viewBox="0 0 3 15"><rect x="0" y="0.0" width="2.2" height="2" fill="#2b86e6"/><rect x="0" y="3.1" width="2.2" height="2" fill="#2b86e6"/><rect x="0" y="6.2" width="2.2" height="2" fill="#2b86e6"/><rect x="0" y="9.3" width="2.2" height="2" fill="#2b86e6"/><rect x="0" y="12.4" width="2.2" height="2" fill="#2b86e6"/></svg>
<svg class="abs" style="left:564.6px;top:66.6px;filter:blur(0.5px)" width="14.875" height="14.875" viewBox="0 0 16 16"><path d="M2 12.5L5.5 3.5L10.5 12L14 3.5" fill="none" stroke="#4f72bc" stroke-width="1.6" stroke-linejoin="round"/><circle cx="2.2" cy="12.5" r="1.5" fill="#6f8fd4"/><circle cx="5.5" cy="3.6" r="1.5" fill="#6f8fd4"/><circle cx="10.5" cy="12" r="1.5" fill="#6f8fd4"/><circle cx="14" cy="3.6" r="1.5" fill="#6f8fd4"/></svg>
<div class="abs" style="left:586.5px;top:64.0px;width:1px;height:21px;background:#f8f8f8;box-shadow:-1px 0 0 #c4c4c4"></div>
<svg class="abs" style="left:589.9px;top:66.8px;filter:blur(.3px)" width="3" height="15" viewBox="0 0 3 15"><rect x="0" y="0.0" width="2.2" height="2" fill="#2b86e6"/><rect x="0" y="3.1" width="2.2" height="2" fill="#2b86e6"/><rect x="0" y="6.2" width="2.2" height="2" fill="#2b86e6"/><rect x="0" y="9.3" width="2.2" height="2" fill="#2b86e6"/><rect x="0" y="12.4" width="2.2" height="2" fill="#2b86e6"/></svg>
<svg class="abs" style="left:594.6px;top:66.6px;filter:blur(0.5px)" width="14.875" height="14.875" viewBox="0 0 16 16"><path d="M1.5 3.5C3 0.5 5 0.5 6.5 3C8 5.5 10 5 11.5 2.5C12.5 1 14 1 15 2" fill="none" stroke="#c8404a" stroke-width="1.1"/><rect x="3" y="4.6" width="10.4" height="10.4" fill="#f0f0f0" stroke="#6f747c" stroke-width=".9"/><rect x="5.8" y="3.4" width="4.8" height="2.2" fill="#a8adb4" stroke="#6f747c" stroke-width=".5"/></svg>
<svg class="abs" style="left:614.6px;top:66.6px;filter:blur(0.5px)" width="14.875" height="14.875" viewBox="0 0 16 16"><path d="M1.5 3.5C3 0.5 5 0.5 6.5 3C8 5.5 10 5 11.5 2.5C12.5 1 14 1 15 2" fill="none" stroke="#c8404a" stroke-width="1.1"/><path d="M1.5 6C4 5 6.5 5.2 8 6.6C9.5 5.2 12 5 14.5 6V14.2C12 13.4 9.5 13.6 8 15C6.5 13.6 4 13.4 1.5 14.2Z" fill="#eef2fa" stroke="#4a6ab4" stroke-width="1.1"/><path d="M8 6.6V15" stroke="#4a6ab4" stroke-width=".8"/></svg>
<svg class="abs" style="left:635.6px;top:66.6px;filter:blur(0.5px)" width="14.875" height="14.875" viewBox="0 0 16 16"><path d="M1.5 3.5C3 0.5 5 0.5 6.5 3C8 5.5 10 5 11.5 2.5C12.5 1 14 1 15 2" fill="none" stroke="#c8404a" stroke-width="1.1"/><rect x="2" y="5.4" width="12" height="9.8" fill="#6f8fd4" stroke="#4a6ab4" stroke-width=".9"/><path d="M8 5.4V15.2M2 9H14" stroke="#a9c0ee" stroke-width=".8"/><rect x="4" y="6.6" width="3" height="1.6" fill="#dfe8fa"/></svg>
<svg class="abs" style="left:656.3px;top:66.6px;filter:blur(0.5px)" width="14.875" height="14.875" viewBox="0 0 16 16"><path d="M1.5 3.5C3 0.5 5 0.5 6.5 3C8 5.5 10 5 11.5 2.5C12.5 1 14 1 15 2" fill="none" stroke="#c8404a" stroke-width="1.1"/><rect x="3.4" y="4.8" width="9.6" height="10.4" fill="#f8f8f8" stroke="#7f848c" stroke-width=".9"/><rect x="3.4" y="4.8" width="9.6" height="2.6" fill="#f2cf3a"/><path d="M6 11L7.6 12.8L10.6 9.2" fill="none" stroke="#2f9a3a" stroke-width="1.4"/></svg>
<svg class="abs" style="left:678.6px;top:66.6px;filter:blur(0.5px)" width="14.875" height="14.875" viewBox="0 0 16 16"><path d="M1.5 3.5C3 0.5 5 0.5 6.5 3C8 5.5 10 5 11.5 2.5C12.5 1 14 1 15 2" fill="none" stroke="#c8404a" stroke-width="1.1"/><path d="M4 15L12 5.5L14.5 7.5L6.5 16Z" fill="#8f949c" stroke="#4a4f58" stroke-width=".8"/></svg>
<!-- menus -->
<div class="menu" style="left:56.4px;top:14.2px;width:153px;height:331.8px">
<div class="gut" style="top:2px;bottom:2px"></div>
<div class="hi" style="left:17.5px;top:238.2px;width:133.5px;height:13.6px"></div>
<div class="mi" style="top:1.8px">Desi<u>g</u>n Parameters...</div>
<div class="mi" style="top:15.8px;letter-spacing:0.005px">Applica<u>t</u>ion Mode</div>
<div class="mi" style="top:29.8px"><u>G</u>rids...</div>
<div class="mi" style="top:43.8px;letter-spacing:-0.160px">C<u>h</u>ange Drawing Origin</div>
<div class="mi" style="top:57.8px"><u>C</u>ross-section...</div>
<div class="mi" style="top:71.8px;letter-spacing:-0.270px"><u>U</u>nused Pads Suppression...</div>
<div class="mi" style="top:85.8px"><u>E</u>mbedded Layer Setup...</div>
<div class="mi" style="top:99.8px;letter-spacing:-0.440px">Su<u>b</u>classes...</div>
<div class="mi" style="top:113.8px"><u>M</u>aterials...</div>
<div class="mi" style="top:127.8px;letter-spacing:-0.140px">B/B <u>V</u>ia Definitions</div>
<div class="mi" style="top:142.1px">Step Package Mapping...</div>
<div class="mi" style="top:160.2px;letter-spacing:-0.380px">Enable On-Line D<u>R</u>C</div>
<div class="mi" style="top:174.1px">Enable Datatips</div>
<div class="mi" style="top:188.0px">Co<u>n</u>straints</div>
<div class="mi" style="top:206.0px;letter-spacing:-0.160px"><u>P</u>roperty Definitions...</div>
<div class="mi" style="top:220.1px;letter-spacing:-0.330px">Define <u>L</u>ists...</div>
<div class="mi" style="top:238.3px"><u>A</u>reas</div>
<div class="mi" style="top:252.4px">O<u>u</u>tlines</div>
<div class="mi" style="top:270.4px;letter-spacing:-0.300px">SI <u>D</u>esign Setup...</div>
<div class="mi" style="top:284.3px">SI Design <u>A</u>udit...</div>
<div class="mi" style="top:302.5px">Datatip Customization...</div>
<div class="mi" style="top:316.4px;letter-spacing:-0.310px">U<u>s</u>er Preferences...</div>
<div class="sep" style="left:18px;top:157.1px;width:132.0px"></div>
<div class="sep" style="left:18px;top:202.9px;width:132.0px"></div>
<div class="sep" style="left:18px;top:235.2px;width:132.0px"></div>
<div class="sep" style="left:18px;top:267.4px;width:132.0px"></div>
<div class="sep" style="left:18px;top:299.2px;width:132.0px"></div>
<div class="arr" style="left:143.2px;top:20.2px"></div>
<div class="arr" style="left:143.2px;top:132.2px"></div>
<div class="arr" style="left:143.2px;top:192.4px"></div>
<div class="arr" style="left:143.2px;top:256.8px"></div>
<div class="arr" style="left:143.2px;top:242.7px;border-left-color:#fff"></div>
<div class="mi" style="left:135.2px;top:29.8px">g</div>
<svg class="abs" style="left:3px;top:161.3px;filter:blur(.3px)" width="11" height="11" viewBox="0 0 11 11"><rect x="1" y="1" width="8.6" height="8.8" fill="#fdfdfd" stroke="#b9484a" stroke-width="1"/><path d="M3 5.2L4.8 7.2L8 3.2" fill="none" stroke="#333" stroke-width="1.5"/></svg>
<svg class="abs" style="left:3px;top:175.0px;filter:blur(.3px)" width="11" height="11" viewBox="0 0 11 11"><rect x="1" y="1" width="8.6" height="8.8" fill="#fdfdfd" stroke="#b9484a" stroke-width="1"/><path d="M3 5.2L4.8 7.2L8 3.2" fill="none" stroke="#333" stroke-width="1.5"/></svg>
<svg class="abs" style="left:3.5px;top:3.4px;filter:blur(.45px)" width="10" height="9.6" viewBox="0 0 12 12" preserveAspectRatio="none"><rect x="0" y="0" width="12" height="11.6" fill="#3a3f48"/><rect x="0" y="0" width="12" height="2" fill="#8a8f98"/><circle cx="6" cy="6.4" r="3.6" fill="#1f4fb8"/><path d="M4 4.5C5.5 3.5 7 5 6.2 6.4C5.6 7.6 7.4 8.2 6.8 9.4C5.6 9.8 4.4 8.6 4.2 7.4Z" fill="#3fc85a"/><path d="M7.6 4.2L8.8 5.6L7.8 6.6Z" fill="#3fc85a"/></svg>
<svg class="abs" style="left:3.4px;top:59.2px;filter:blur(.45px)" width="10.4" height="9.8" viewBox="0 0 13 12" preserveAspectRatio="none"><path d="M1 4.5L6 2L12 4L7 6.5Z" fill="#b8403a"/><path d="M1 6.6L6 4.4L12 6.4L7 8.8Z" fill="#2f8a3a"/><path d="M1 8.8L6 6.8L12 8.6L7 11Z" fill="#3a3030"/><path d="M3 3L9 1.5" stroke="#4a6a3a" stroke-width="1.2"/></svg>
<svg class="abs" style="left:3px;top:284.4px;filter:blur(.4px)" width="11" height="13" viewBox="0 0 11 13"><path d="M1 1L8 6M8 1L1 6" stroke="#d8403a" stroke-width="1.4"/><rect x="3.6" y="5.4" width="5.4" height="6.6" fill="#e8e4d8" stroke="#4a3a2a" stroke-width=".9"/><rect x="4.6" y="7.6" width="3.4" height="3" fill="#4a9a4a"/><path d="M2 12H10" stroke="#5a3a2a" stroke-width="1"/><rect x="5" y="3" width="2.4" height="2.4" fill="#e8c84a"/></svg>
</div>
<div class="menu" style="left:205.6px;top:250.8px;width:113.1px;height:170.4px">
<div class="gut" style="width:15px;top:2px;bottom:2px"></div>
<div class="hi" style="left:17px;top:154.2px;width:93.1px;height:13.2px"></div>
<div class="mi" style="left:20.1px;top:1.7px"><u>P</u>ackage Keepin</div>
<div class="mi" style="left:20.1px;top:15.8px">Package <u>K</u>eepout</div>
<div class="mi" style="left:20.1px;top:29.8px">Package <u>H</u>eight</div>
<div class="mi" style="left:20.1px;top:48.0px"><u>R</u>oute Keepin</div>
<div class="mi" style="left:20.1px;top:61.9px">Ro<u>u</u>te Keepout</div>
<div class="mi" style="left:20.1px;top:76.0px;letter-spacing:-0.140px"><u>W</u>ire Keepout</div>
<div class="mi" style="left:20.1px;top:90.0px"><u>V</u>ia Keepout</div>
<div class="mi" style="left:20.1px;top:103.9px"><u>S</u>hape Keepout</div>
<div class="mi" style="left:20.1px;top:122.1px">Pro<u>b</u>e Keepout</div>
<div class="mi" style="left:20.1px;top:136.0px"><u>G</u>loss Keepout</div>
<div class="mi" style="left:20.1px;top:154.1px;letter-spacing:-0.080px">Photoplot <u>O</u>utline</div>
<div class="sep" style="left:18px;top:44.9px;width:91.6px"></div>
<div class="sep" style="left:18px;top:118.6px;width:91.6px"></div>
<div class="sep" style="left:18px;top:150.9px;width:91.6px"></div>
<svg class="abs" style="left:3.4px;top:3.8px;filter:blur(.35px)" width="10" height="10" viewBox="0 0 10 10"><rect x="0.5" y="0.5" width="9" height="9" fill="#3f5fb4" stroke="#2a3f8a" stroke-width=".8"/><rect x="2" y="2" width="2.6" height="2.4" fill="#e8eefa"/><rect x="5.4" y="2" width="2.6" height="5.6" fill="#c8d4f0"/><rect x="2" y="5.4" width="2.6" height="2.2" fill="#9fb4e4"/></svg>
<svg class="abs" style="left:3.4px;top:50.1px;filter:blur(.35px)" width="10" height="10" viewBox="0 0 10 10"><rect x="0.5" y="0.5" width="9" height="9" fill="#3f5fb4" stroke="#2a3f8a" stroke-width=".8"/><path d="M2 7.5V4.5H5V2.5H8" fill="none" stroke="#e8eefa" stroke-width="1.2"/><rect x="5.6" y="5.4" width="2.4" height="2.4" fill="#c8d4f0"/></svg>
</div>
<svg class="abs" style="left:0;top:0;pointer-events:none" width="689" height="510" viewBox="0 0 689 510">
<g fill="none" stroke="#e8141c" stroke-linecap="round" stroke-linejoin="round">
<path d="M36.7 35.6C39.6 31.6 42.4 26.4 45 23C46.2 21.6 47.2 20.9 48.4 20.5" stroke-width="2.1"/>
<path d="M156.1 248.3C157.6 250 159.6 252.6 160 256.4C160 257.6 159.4 258.4 158.7 258.9" stroke-width="1.8"/>
<path d="M149.4 261.5C152.4 261.9 156 260.6 159 259.4" stroke-width="2.7"/>
<path d="M157 260.2C161 258.6 165.4 258.2 169 258.5" stroke-width="1.7"/>
<path d="M298.1 401.4C300 399.6 303 399 304.8 399.7C306.6 400.6 306.8 402.2 306.2 403.2C305 405.6 303 407 301.6 407.7C299.6 408.6 297.6 409 296.2 409.4C297.6 410.4 298.6 411.6 299.1 413.2C299.8 415.4 299.9 417 299.5 418.4C299.2 419.8 298.9 420.6 298.4 421.1C297.4 422.2 295.6 422.8 293.4 423" stroke-width="2.1"/>
</g></svg>
<div class="wm" style="left:147px;top:72px;color:rgba(150,150,150,.15)">qiming.dai 苏映视</div>
<div class="wm" style="left:222px;top:201px;color:rgba(150,150,150,.15)">qiming.dai 苏映视</div>
<div class="wm" style="left:299px;top:335px;color:rgba(150,150,150,.15)">qiming.dai 苏映视</div>
<div class="wm" style="left:620px;top:149px;color:rgba(150,150,150,.15)">qiming.dai 苏映视</div>
<div class="wm" style="left:375px;top:463px;color:rgba(150,150,150,.15)">qiming.dai 苏映视</div>
<div class="wm" style="left:-92px;top:381px;color:rgba(150,150,150,.15)">qiming.dai 苏映视</div>
<div class="wm" style="left:-18px;top:517px;color:rgba(150,150,150,.15)">qiming.dai 苏映视</div>
<div class="wm" style="left:543px;top:18px;color:rgba(150,150,150,.15)">qiming.dai 苏映视</div>
</body></html>
